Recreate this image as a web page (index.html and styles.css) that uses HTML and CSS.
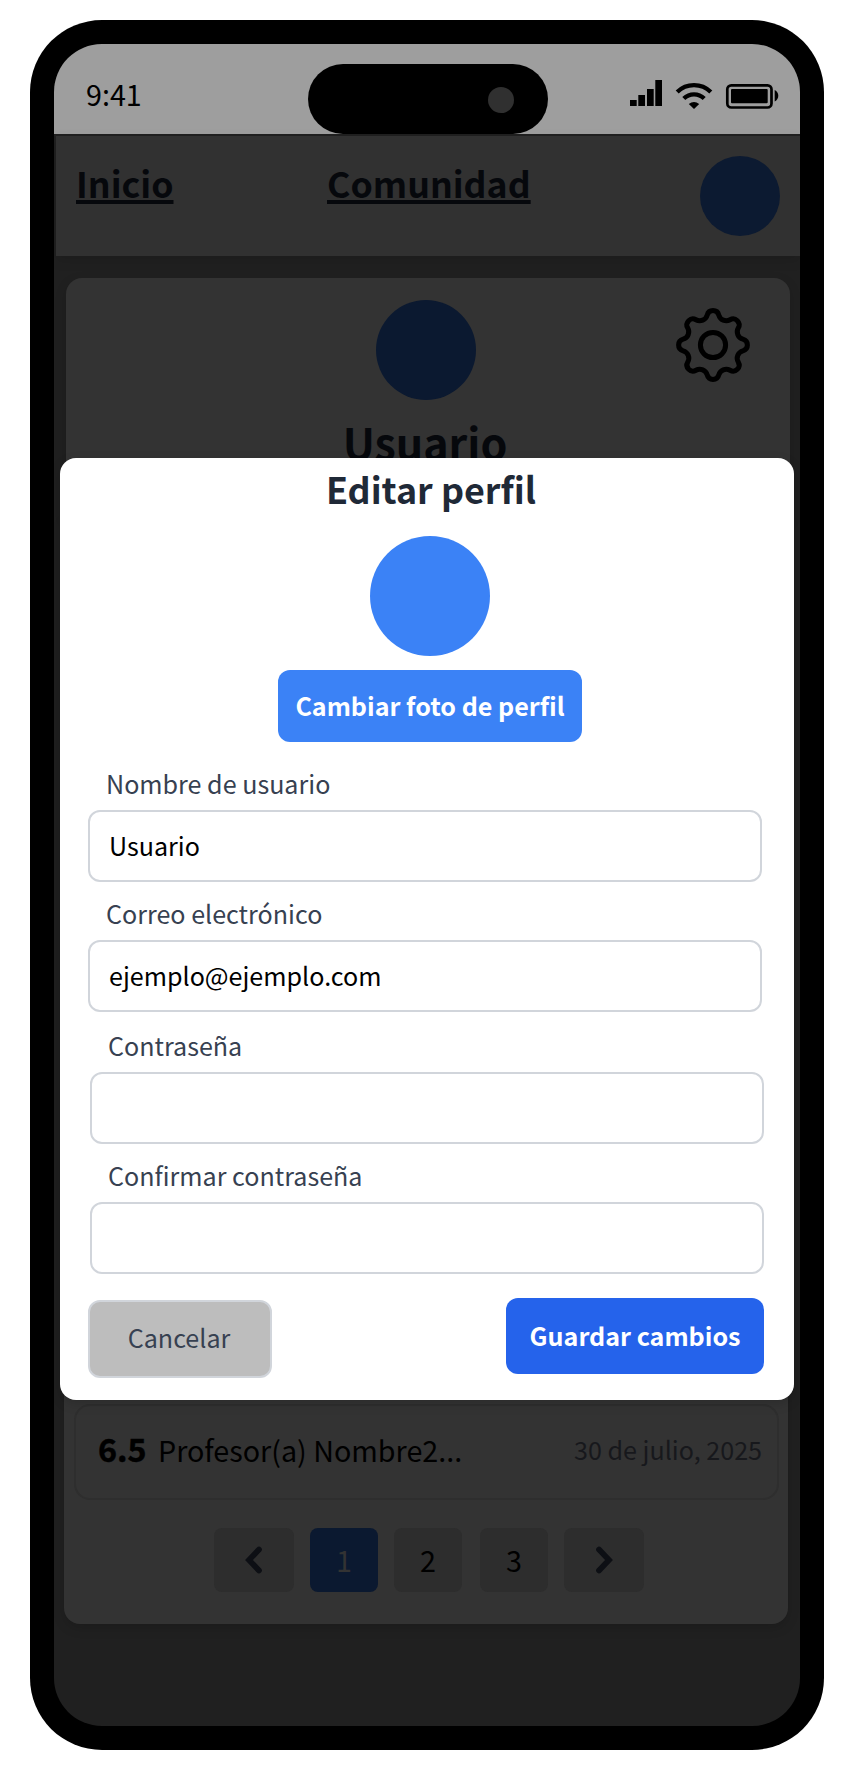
FILE: index.html
```html
<!DOCTYPE html>
<html lang="es">
<head>
<meta charset="utf-8">
<title>Editar perfil</title>
<link rel="stylesheet" href="styles.css">
</head>
<body>
<div class="phone">
  <div class="screen">
    <div class="status">
      <span class="time">9:41</span>
      <div class="island"><span class="camera"></span></div>
      <svg class="indicators" width="150" height="32" viewBox="0 0 150 32">
        <path d="M0 23h6.7v6H0zM8.3 18H15v11H8.3zM17 12h6.7v17H17zM25.3 3H32v26h-6.7z"/>
        <g fill="none" stroke="#000" stroke-width="4.300">
          <path d="M47.200 15A24 24 0 0 1 80.800 15"/>
          <path d="M53.800 21.500A14.500 14.500 0 0 1 74.200 21.500"/>
        </g>
        <path d="M64 32L58.800 27Q64 23 69.200 27Z"/>
        <rect x="97.300" y="8.300" width="44.200" height="22.200" rx="4" fill="none" stroke="#000" stroke-width="2.700"/>
        <rect x="101" y="12" width="36.700" height="14.300" rx="1"/>
        <path d="M144.700 13Q148.300 15 148.300 18.800T144.700 24.500z"/>
      </svg>
    </div>
    <nav class="nav">
      <a class="link">Inicio</a>
      <a class="link">Comunidad</a>
      <span class="avatar"></span>
    </nav>
    <section class="card profile">
      <span class="photo"></span>
      <h1 class="name">Usuario</h1>
      <svg class="gear" width="78" height="78" viewBox="-39 -39 78 78" fill="none" stroke="#000" stroke-width="5">
        <circle r="12.600"/>
        <path d="M-5.810 -29.900A6 6 0 0 1 5.810 -29.900A7.670 7.670 0 0 0 17.030 -25.250A6 6 0 0 1 25.250 -17.030A7.670 7.670 0 0 0 29.900 -5.810A6 6 0 0 1 29.900 5.810A7.670 7.670 0 0 0 25.250 17.030A6 6 0 0 1 17.030 25.250A7.670 7.670 0 0 0 5.810 29.900A6 6 0 0 1 -5.810 29.900A7.670 7.670 0 0 0 -17.030 25.250A6 6 0 0 1 -25.250 17.030A7.670 7.670 0 0 0 -29.900 5.810A6 6 0 0 1 -29.900 -5.810A7.670 7.670 0 0 0 -25.250 -17.030A6 6 0 0 1 -17.030 -25.250A7.670 7.670 0 0 0 -5.810 -29.900Z"/>
      </svg>
    </section>
    <section class="card reviews">
      <div class="review">
        <b class="score">6.5</b>
        <span class="teacher">Profesor(a) Nombre2...</span>
        <span class="date">30 de julio, 2025</span>
      </div>
      <div class="pages">
        <span class="page arrow"><svg width="20" height="30" viewBox="0 0 20 30"><path d="M15 4.500L5 15L15 25.500"/></svg></span>
        <span class="page current">1</span>
        <span class="page">2</span>
        <span class="page third">3</span>
        <span class="page arrow"><svg width="20" height="30" viewBox="0 0 20 30"><path d="M5 4.500L15 15L5 25.500"/></svg></span>
      </div>
    </section>
  </div>
  <div class="modal">
    <div class="top">
      <h2 class="title">Editar perfil</h2>
      <span class="picture"></span>
      <button class="change">Cambiar foto de perfil</button>
    </div>
    <label class="label">Nombre de usuario</label>
    <div class="input">Usuario</div>
    <label class="label">Correo electrónico</label>
    <div class="input">ejemplo@ejemplo.com</div>
    <div class="secrets">
      <label class="label">Contraseña</label>
      <div class="input"></div>
      <label class="label">Confirmar contraseña</label>
      <div class="input"></div>
    </div>
    <div class="actions">
      <button class="cancel">Cancelar</button>
      <button class="save">Guardar cambios</button>
    </div>
  </div>
</div>
</body>
</html>
```
FILE: styles.css
```css
* { box-sizing: border-box; }
body {
  margin: 0;
  padding: 20px 30px;
  background: #fff;
  color: #000;
  font-family: "Noto Sans CJK SC", sans-serif;
}
h1, h2 { margin: 0; }
button { font-family: inherit; border: 0; padding: 0; }

.phone {
  position: relative;
  width: 794px;
  height: 1730px;
  border-radius: 72px;
  background: #000;
  padding: 24px;
}
.screen {
  display: flex;
  flex-direction: column;
  height: 1682px;
  border-radius: 48px;
  overflow: hidden;
  background: #202020;
}

.status {
  display: grid;
  grid-template-columns: 254px 240px 252px;
  height: 90px;
  flex: none;
  background: #9e9e9e;
}
.time { padding: 21px 0 0 32px; font-size: 28.7px; line-height: 58px; }
.island {
  height: 70px;
  margin-top: 20px;
  padding: 23px 34px;
  border-radius: 35px;
  background: #000;
  display: flex;
  justify-content: flex-end;
}
.camera { width: 26px; height: 26px; border-radius: 50%; background: #303030; }
.indicators { margin: 33px 0 0 82px; }

.nav {
  display: grid;
  grid-template-columns: 251px 373px 80px;
  height: 120px;
  flex: none;
  margin: 2px 0 0 2px;
  padding: 20px;
  background: #313131;
  box-shadow: 0 4px 12px rgba(0, 0, 0, .12);
}
.link {
  justify-self: start;
  align-self: start;
  color: #06080c;
  font-size: 35.7px;
  font-weight: 700;
  line-height: 53px;
  text-decoration: underline;
  text-decoration-thickness: 4px;
  text-underline-offset: 2px;
}
.avatar { width: 80px; height: 80px; border-radius: 50%; background: #0c1a31; }

.card { width: 724px; background: #333; box-shadow: 0 4px 12px rgba(0, 0, 0, .15); }
.profile {
  display: grid;
  grid-template-columns: 1fr 100px 1fr;
  align-content: start;
  height: 240px;
  margin: 22px 0 0 12px;
  padding: 22px 0 0;
  border-radius: 16px 16px 0 0;
  flex: none;
}
.photo { grid-column: 2; height: 100px; border-radius: 50%; background: #0b1930; margin-left: -2px; margin-right: 2px; }
.gear { grid-column: 3; grid-row: 1; margin: 6px 0 0 196px; }
.name { grid-column: 1 / 4; text-align: center; padding-right: 6px; color: #06080c; font-size: 43px; line-height: 60px; margin-top: 11px; }

.reviews {
  flex: none;
  height: 1106px;
  margin-left: 10px;
  padding: 886px 9px 0 10px;
  border-radius: 0 0 16px 16px;
}
.review {
  display: flex;
  align-items: flex-start;
  height: 96px;
  border: 2px solid #2e2e2e;
  border-radius: 16px;
  padding: 20px 15px 0 22px;
}
.score { width: 49px; font-size: 32.2px; line-height: 44px; -webkit-text-stroke: .5px #000; }
.teacher { margin-left: 11px; font-size: 28.7px; line-height: 47px; }
.date { margin-left: auto; font-size: 25.1px; line-height: 47px; color: #17181c; }
.pages { display: flex; gap: 16px; margin: 28px 0 0 140px; }
.page {
  width: 68px;
  height: 64px;
  border-radius: 8px;
  background: #2d2d2d;
  text-align: center;
  font-size: 28.7px;
  line-height: 64px;
}
.current { background: #0b1930; color: #333; }
.third { margin-left: 2px; }
.arrow { width: 80px; display: flex; align-items: center; justify-content: center; }
.arrow path { fill: none; stroke: #0d0f14; stroke-width: 5.7; stroke-linecap: round; }

.modal {
  position: absolute;
  left: 30px;
  top: 438px;
  width: 734px;
  height: 942px;
  padding: 0 30px 0 28px;
  border-radius: 16px;
  background: #fff;
  box-shadow: 0 4px 12px rgba(0, 0, 0, .15);
}
.top { display: flex; flex-direction: column; align-items: center; padding-left: 8px; }
.title { height: 78px; padding-left: 2px; font-size: 35.9px; line-height: 61px; color: #1f2937; }
.picture { width: 120px; height: 120px; border-radius: 50%; background: #3b82f6; }
.change {
  width: 304px;
  height: 72px;
  margin: 14px 0 16px;
  padding-bottom: 2px;
  border-radius: 12px;
  background: #3b82f6;
  color: #fff;
  font-size: 25.1px;
  font-weight: 700;
}
.label { display: block; height: 52px; margin-left: 18px; font-size: 25.1px; line-height: 51px; color: #374151; }
.input {
  width: 674px;
  height: 72px;
  margin-bottom: 6px;
  padding-left: 19px;
  border: 2px solid #d1d5db;
  border-radius: 12px;
  font-size: 25.1px;
  line-height: 67px;
}
.secrets { padding: 2px 0 0 2px; }
.actions { display: flex; justify-content: space-between; align-items: flex-start; margin-top: 24px; }
.cancel, .save { padding-bottom: 2px; font-size: 25.1px; border-radius: 12px; }
.cancel { width: 184px; height: 78px; margin-top: 2px; padding: 0 2px 4px 0; background: #bdbdbd; border: 2px solid #d1d5db; color: #374151; }
.save { width: 258px; height: 76px; background: #2563eb; color: #fff; font-weight: 700; }
```
